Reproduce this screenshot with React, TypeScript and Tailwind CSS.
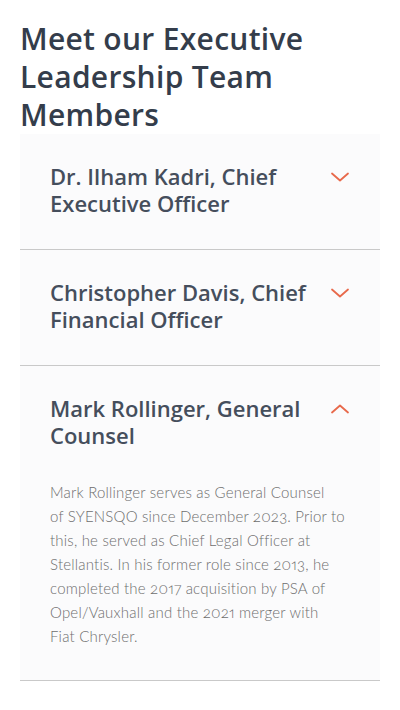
import React, { useState } from "react";

type Member = {
  name: string;
  bio?: string;
};

const members: Member[] = [
  { name: "Dr. Ilham Kadri, Chief Executive Officer" },
  { name: "Christopher Davis, Chief Financial Officer" },
  {
    name: "Mark Rollinger, General Counsel",
    bio: "Mark Rollinger serves as General Counsel of\u00a0SYENSQO since December 2023. Prior to this, he served as Chief Legal Officer at Stellantis. In his former role since 2013, he completed the 2017 acquisition by PSA of Opel/Vauxhall and the 2021 merger with Fiat\u00a0Chrysler.",
  },
];

const Chevron = ({ open }: { open: boolean }) => (
  <svg
    width="20"
    height="12"
    viewBox="0 0 20 12"
    fill="none"
    className={open ? "rotate-180" : ""}
  >
    <path
      d="M2 2.5l8 7 8-7"
      stroke="#e8694b"
      strokeWidth="1.8"
      strokeLinecap="round"
      strokeLinejoin="round"
    />
  </svg>
);

const App = () => {
  const [openIndex, setOpenIndex] = useState<number | null>(2);

  return (
    <div className="min-h-[710px] bg-white px-5 pt-5 font-['Open_Sans',sans-serif]">
      <h1 className="text-[30px] leading-[38px] font-semibold text-[#343d4b] tracking-[0.3px]">
        Meet our Executive Leadership Team Members
      </h1>
      <div className="bg-[#fbfbfc]">
        {members.map((m, i) => {
          const open = openIndex === i;
          return (
            <div key={m.name} className="border-b border-[#c9c9c9] px-[30px] pt-[29px] pb-[32px]">
              <button
                className="flex w-full items-start gap-2 text-left"
                onClick={() => setOpenIndex(open ? null : i)}
              >
                <span className="flex-1 text-[22px] leading-[27px] font-semibold text-[#454e5c]">
                  {m.name}
                </span>
                <span className="mt-[8px] shrink-0">
                  <Chevron open={open} />
                </span>
              </button>
              {open && m.bio && (
                <p className="mt-[31px] w-[300px] font-['Lato',sans-serif] text-[15px] leading-[24px] font-light tracking-[0.2px] text-[#6e6e6e] oldstyle-nums proportional-nums">
                  {m.bio}
                </p>
              )}
            </div>
          );
        })}
      </div>
    </div>
  );
};

export default App;
